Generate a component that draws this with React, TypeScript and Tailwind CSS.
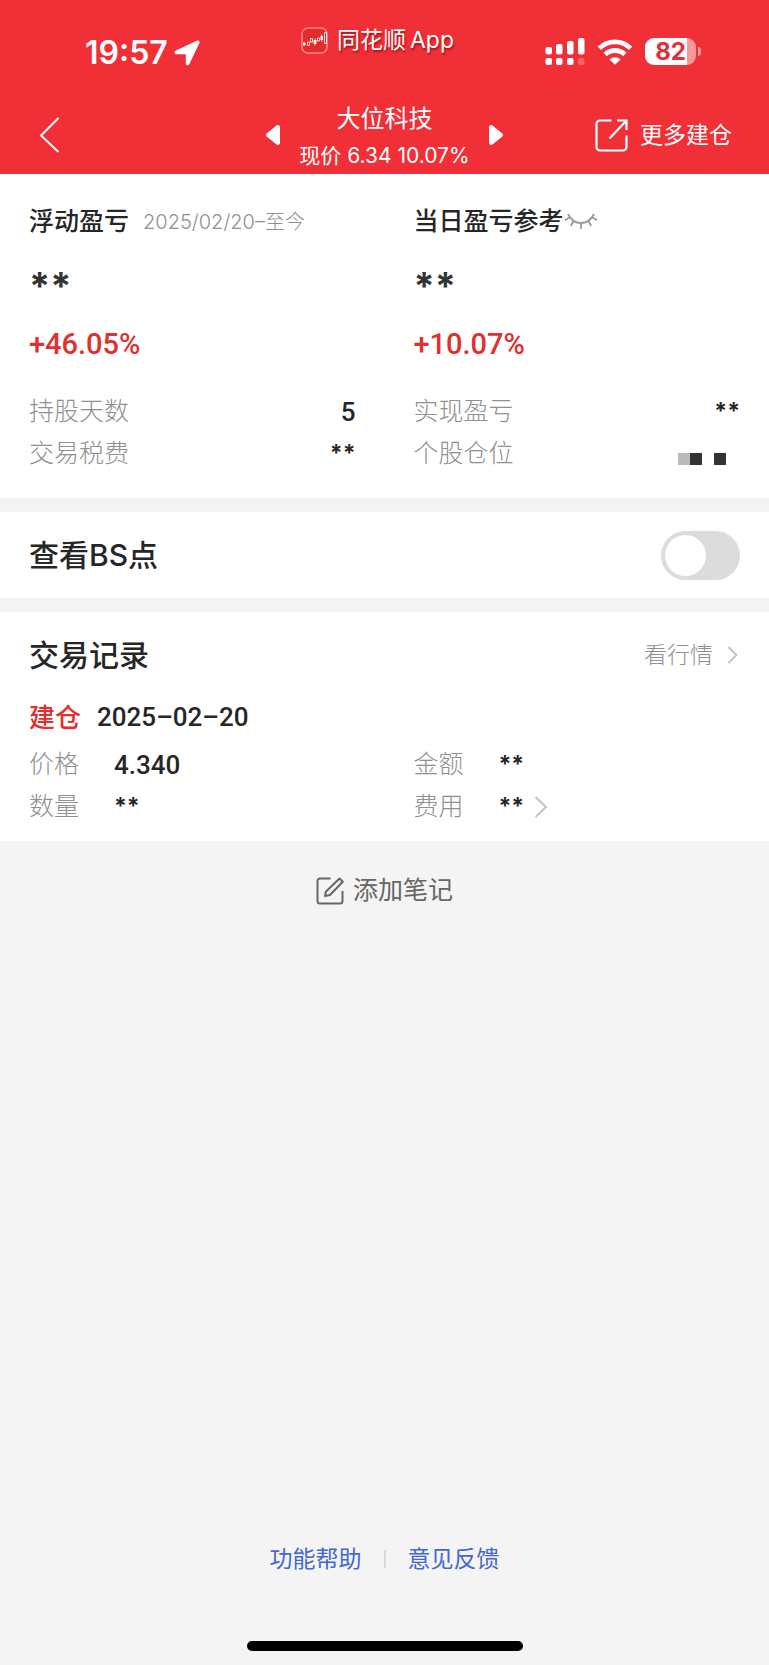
import { useState } from "react";
import type { ReactNode } from "react";

const LATIN_CJK = "font-['Inter','Noto_Sans_CJK_SC',sans-serif]";
const NUMERIC = "font-['Roboto','Noto_Sans_CJK_SC',sans-serif]";

function LocationArrow() {
  return (
    <svg className="h-[26px] w-[26px]" viewBox="0 0 26 26" fill="#fff" aria-hidden="true">
      <path d="M22.800.8 1.800 10.600C-.2 11.600.2 14.200 2.400 14.200H11.800V23.400C11.800 25.700 14.400 26 15.300 24.200L25.300 3.200C26.100 1.400 24.600 0 22.800.8Z" />
    </svg>
  );
}

function AppBadge() {
  return (
    <svg className="h-[27px] w-[27px]" viewBox="0 0 27 27" fill="none" aria-hidden="true">
      <rect x="1" y="1" width="25" height="25" rx="6" fill="#e32a2c" stroke="#f98a8c" strokeWidth="1.500" />
      <path d="M2 15.500h2.500v3H2zM12.500 13h3v4h-3zM19.500 9h2.500v4h-2.500z" fill="#fff" />
      <path d="M6.500 15h2v3.500h-2zM9.500 11.500h2V15h-2zM16.500 11h2v3h-2zM23.500 5.500h2v11h-2zM14 11.500v7M20.700 7.500v7" stroke="#fff" strokeWidth="0.800" />
    </svg>
  );
}

function SignalIcon() {
  return (
    <svg className="h-[27px] w-[40px]" viewBox="0 0 40 27" fill="#fff" aria-hidden="true">
      <rect x="0.500" y="9" width="6.500" height="7.500" rx="2" />
      <rect x="11" y="6" width="6.500" height="10.500" rx="2" />
      <rect x="22" y="3" width="6.500" height="13.500" rx="2" />
      <rect x="33" y="0" width="6.500" height="16.500" rx="2" />
      <rect x="0.500" y="20" width="6.500" height="7" rx="2" />
      <rect x="11" y="20" width="6.500" height="7" rx="2" />
      <rect x="22" y="20" width="6.500" height="7" rx="2" />
      <rect x="33" y="20" width="6.500" height="7" rx="2" opacity="0.250" />
    </svg>
  );
}

function WifiIcon() {
  return (
    <svg className="h-[26px] w-[36px]" viewBox="0 0 36 26" fill="none" stroke="#fff" strokeWidth="4.800" aria-hidden="true">
      <path d="M2.300 9.200a22.500 22.500 0 0 1 31.400 0" />
      <path d="M8.200 15.400a14.300 14.300 0 0 1 19.600 0" />
      <path d="M12.500 20.400a8.200 8.200 0 0 1 11 0L18 25.800Z" fill="#fff" stroke="none" />
    </svg>
  );
}

function Battery() {
  return (
    <div className="flex items-center gap-[2px]">
      <div className="flex h-[27px] w-[51px] items-center justify-center overflow-hidden rounded-[9px] bg-[linear-gradient(to_right,#fff_82%,#f9989b_82%)] font-['Inter',sans-serif] text-[24px] font-bold leading-[27px] text-[#e03038]">
        82
      </div>
      <span className="h-[9px] w-[3px] rounded-r-full bg-[#f9989b]" />
    </div>
  );
}

function StatusBar() {
  return (
    <div className="grid h-[94px] grid-cols-[1fr_auto_1fr]">
      <div className="flex items-center gap-[6px] pl-[85px] pt-[11px]">
        <span className="font-['Inter',sans-serif] text-[32px] font-semibold leading-[36px]">19:57</span>
        <LocationArrow />
      </div>
      <div className="flex items-center gap-[9px] self-start pr-[14px] pt-[24px]">
        <AppBadge />
        <span className="flex gap-1 text-[23px] leading-[32px] [text-shadow:1px_2px_2px_rgba(110,0,0,0.6)]">
          <span>同花顺</span>
          <span>App</span>
        </span>
      </div>
      <div className="flex items-center justify-end gap-[12px] pr-[68px] pt-[9px]">
        <SignalIcon />
        <WifiIcon />
        <Battery />
      </div>
    </div>
  );
}

function Triangle({ flip = false }: { flip?: boolean }) {
  return (
    <svg className={flip ? "h-[20px] w-[14px] rotate-180" : "h-[20px] w-[14px]"} viewBox="0 0 14 20" fill="#fff" aria-hidden="true">
      <path d="M.7 8.600 10.500.6C12 -.5 14 .3 14 2.400V17.600C14 19.700 12 20.500 10.500 19.400L.7 11.400C-.2 10.600-.2 9.400.7 8.600Z" />
    </svg>
  );
}

function NavBar() {
  return (
    <nav className="grid h-[80px] grid-cols-[1fr_auto_1fr] items-center pt-[2px]">
      <button type="button" aria-label="返回" className="ml-[39px] justify-self-start">
        <svg className="h-[38px] w-[22px]" viewBox="0 0 22 38" fill="none" stroke="#fff" strokeWidth="2" aria-hidden="true">
          <path d="M19.500 2 2 19.500 19.500 36" />
        </svg>
      </button>
      <div className="flex items-center gap-[19px]">
        <button type="button" aria-label="上一只"><Triangle /></button>
        <div className="flex flex-col items-center pt-[3px]">
          <h1 className="text-[24px] font-normal leading-[38px]">大位科技</h1>
          <p className="text-[21px] leading-[36px]">现价 6.34 10.07%</p>
        </div>
        <button type="button" aria-label="下一只"><Triangle flip /></button>
      </div>
      <button type="button" className="mr-[37px] flex items-center gap-[12px] justify-self-end text-[23px] leading-[34px]">
        <svg className="h-[33px] w-[33px]" viewBox="0 0 33 33" fill="none" stroke="#fff" strokeWidth="2.200" aria-hidden="true">
          <path d="M16.500 1.500H5a3.500 3.500 0 0 0-3.500 3.500v23A3.500 3.500 0 0 0 5 31.500h23a3.500 3.500 0 0 0 3.500-3.500V16.500M22 1.500h9.500V11M31.500 1.500 14.500 19.500" />
        </svg>
        更多建仓
      </button>
    </nav>
  );
}

function Stars({ large = false }: { large?: boolean }) {
  return (
    <span className={large
      ? "block font-['Inter',sans-serif] text-[38px] font-bold leading-[48px] text-[#333]"
      : "block pb-[2px] font-['Inter',sans-serif] text-[23px] font-bold leading-[28px] text-[#262626]"}>
      **
    </span>
  );
}

function Stat({ label, children }: { label: string; children: ReactNode }) {
  return (
    <div className="flex h-[42px] items-center justify-between">
      <dt className="text-[25px] font-light text-[#909090]">{label}</dt>
      <dd className={`${NUMERIC} text-[26px] font-medium text-[#262626]`}>{children}</dd>
    </div>
  );
}

function Detail({ label, children }: { label: string; children: ReactNode }) {
  return (
    <div className="flex h-[42px] items-center">
      <dt className="w-[85px] text-[25px] font-light text-[#909090]">{label}</dt>
      <dd className={`${NUMERIC} flex items-center gap-[10px] text-[26px] font-medium text-[#262626]`}>{children}</dd>
    </div>
  );
}

function ClosedEye() {
  return (
    <svg className="h-[18px] w-[34px]" viewBox="0 0 34 18" fill="none" stroke="#999" strokeWidth="1.800" aria-hidden="true">
      <path d="M4 1C10 13 24 13 30 1M1 7.200 6 4.200M33 7.200 28 4.200M9.200 8.500 6.800 13M24.800 8.500 27.200 13M17 10.200V16" />
    </svg>
  );
}

function Mosaic() {
  return (
    <span className="mr-[14px] mt-[10px] flex">
      <span className="h-3 w-3 bg-[#bbb]" />
      <span className="mr-3 h-3 w-3 bg-[#333]" />
      <span className="h-3 w-3 bg-[#333]" />
    </span>
  );
}

function Summary() {
  return (
    <section className="grid grid-cols-2 gap-x-[58px] bg-white px-[29px] pb-[23px] pt-[29px]">
      <div>
        <div className="flex h-[38px] items-center gap-[14px]">
          <h2 className="text-[25px] font-medium text-[#262626]">浮动盈亏</h2>
          <span className="text-[20px] font-light text-[#909090]">2025/02/20–至今</span>
        </div>
        <div className="pt-[21px]"><Stars large /></div>
        <p className={`${NUMERIC} pt-[14px] text-[29px] font-medium leading-[40px] text-[#e1302f]`}>+46.05%</p>
        <dl className="pt-[27px]">
          <Stat label="持股天数">5</Stat>
          <Stat label="交易税费"><Stars /></Stat>
        </dl>
      </div>
      <div>
        <div className="flex h-[38px] items-center">
          <h2 className="text-[25px] font-medium text-[#262626]">当日盈亏参考</h2>
          <button type="button" aria-label="显示金额"><ClosedEye /></button>
        </div>
        <div className="pt-[21px]"><Stars large /></div>
        <p className={`${NUMERIC} pt-[14px] text-[29px] font-medium leading-[40px] text-[#e1302f]`}>+10.07%</p>
        <dl className="pt-[27px]">
          <Stat label="实现盈亏"><Stars /></Stat>
          <Stat label="个股仓位"><Mosaic /></Stat>
        </dl>
      </div>
    </section>
  );
}

function BsToggle() {
  const [on, setOn] = useState(false);
  return (
    <section className="bg-white px-[29px]">
      <label className="flex h-[86px] items-center justify-between">
        <span className="text-[30px] font-medium text-[#262626]">查看BS点</span>
        <input
          type="checkbox"
          role="switch"
          checked={on}
          onChange={(e) => setOn(e.target.checked)}
          className="h-[49px] w-[79px] cursor-pointer appearance-none rounded-full bg-[#dcdcdc] p-[4px] before:block before:h-[41px] before:w-[41px] before:rounded-full before:bg-white before:content-[''] checked:bg-[#f12f37] checked:before:translate-x-[30px]"
        />
      </label>
    </section>
  );
}

function Records() {
  return (
    <section className="bg-white px-[29px] pb-[13px] pt-[20px]">
      <div className="flex h-[46px] items-center justify-between">
        <h2 className="text-[30px] font-medium text-[#262626]">交易记录</h2>
        <a href="#quote" className="flex items-center gap-[14px] pr-[2px] text-[23px] font-light text-[#909090]">
          看行情
          <svg className="h-[18px] w-[11px]" viewBox="0 0 11 18" fill="none" stroke="#c4c4c4" strokeWidth="2" aria-hidden="true">
            <path d="M1.500 1 9.500 9 1.500 17" />
          </svg>
        </a>
      </div>
      <div className="mt-[19px] flex h-[40px] items-center gap-[16px]">
        <span className="text-[26px] font-medium text-[#e1302f]">建仓</span>
        <time dateTime="2025-02-20" className={`${NUMERIC} text-[26px] font-medium text-[#262626]`}>2025–02–20</time>
      </div>
      <dl className="grid grid-cols-2 gap-x-[58px] pt-[7px]">
        <Detail label="价格">4.340</Detail>
        <Detail label="金额"><Stars /></Detail>
        <Detail label="数量"><Stars /></Detail>
        <Detail label="费用">
          <Stars />
          <svg className="h-[22px] w-[14px]" viewBox="0 0 14 22" fill="none" stroke="#c4c4c4" strokeWidth="2" aria-hidden="true">
            <path d="M1.500 1 12 11 1.500 21" />
          </svg>
        </Detail>
      </dl>
    </section>
  );
}

export default function App() {
  return (
    <div className={`${LATIN_CJK} flex min-h-screen flex-col bg-[#f4f4f4]`}>
      <header className="bg-[#f12f37] text-white">
        <StatusBar />
        <NavBar />
      </header>
      <main className="flex flex-1 flex-col">
        <div className="flex flex-col gap-[14px]">
          <Summary />
          <BsToggle />
          <Records />
        </div>
        <button type="button" className="mt-[30px] flex h-[40px] items-center gap-[9px] self-center text-[25px] text-[#666]">
          <svg className="h-[28px] w-[28px]" viewBox="0 0 28 28" fill="none" stroke="#666" strokeWidth="2" strokeLinejoin="round" aria-hidden="true">
            <path d="M14.500 1.500H4A2.500 2.500 0 0 0 1.500 4V24A2.500 2.500 0 0 0 4 26.500H24A2.500 2.500 0 0 0 26.500 24V14M23.500 1.500 26.800 4.800 14 18 9 19 10 14.500Z" />
          </svg>
          添加笔记
        </button>
      </main>
      <footer className="flex flex-col items-center pb-[14px]">
        <div className="flex h-[36px] items-center gap-[22px] text-[23px] text-[#4468cb]">
          <a href="#help">功能帮助</a>
          <span className="h-[18px] w-[2px] bg-[#d8d8d8]" />
          <a href="#feedback">意见反馈</a>
        </div>
        <div className="mt-[64px] h-[10px] w-[276px] rounded-full bg-black" />
      </footer>
    </div>
  );
}
